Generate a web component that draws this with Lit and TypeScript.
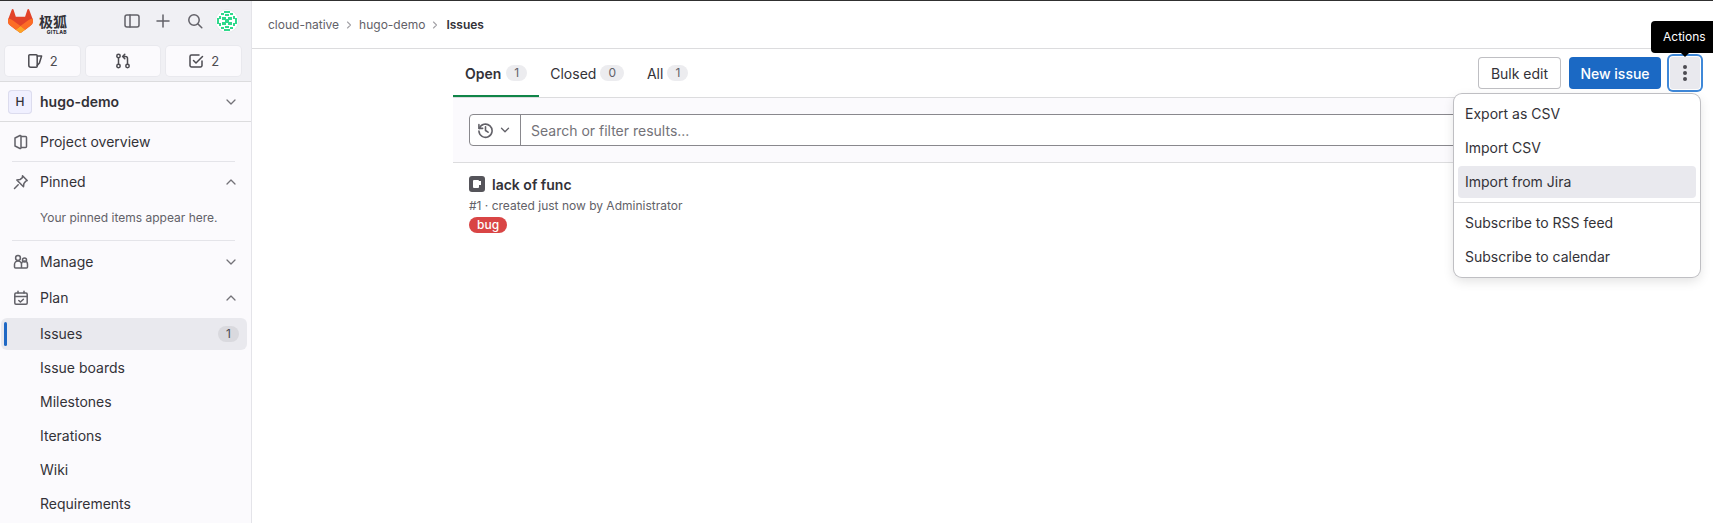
import { LitElement, html, css, svg } from 'lit';
import { customElement } from 'lit/decorators.js';

//
// gitlab issue list, sidebar on the left and the actions menu open
//

const icon = (body: unknown, size = 16) => html`
  <svg class="ico" width="${size}" height="${size}" viewBox="0 0 16 16" fill="none"
    stroke="currentColor" stroke-width="1.5" stroke-linecap="round" stroke-linejoin="round">${body}</svg>`;

const icons = {
  sidebar: svg`<rect x="1" y="2" width="14" height="12" rx="2"/><path d="M6 2v12"/>`,
  plus: svg`<path d="M8 2v12M2 8h12"/>`,
  search: svg`<circle cx="7" cy="7" r="5.2"/><path d="M11 11l3.8 3.8"/>`,
  issues: svg`<path d="M2.8 1.8h6.4a1 1 0 0 1 1 1v10.4a1 1 0 0 1-1 1H3.8a2 2 0 0 1-2-2V2.8a1 1 0 0 1 1-1z"/><path d="M10.2 3h4.4l-2.2 7-2.2 2.5"/>`,
  mr: svg`<circle cx="3.5" cy="3" r="1.7"/><circle cx="3.5" cy="13" r="1.7"/><circle cx="12.5" cy="13" r="1.7"/><path d="M3.5 4.7v6.6M12.5 11.3V5.5a2 2 0 0 0-2-2H8M9.8 1.2L7.6 3.5l2.2 2.3"/>`,
  todo: svg`<path d="M14 8v4.5a1.5 1.5 0 0 1-1.5 1.5h-9A1.5 1.5 0 0 1 2 12.5v-9A1.5 1.5 0 0 1 3.5 2H11"/><path d="M5.5 7.5L8 10l6.5-6.5"/>`,
  project: svg`<path d="M2 4l5-2.5c.5-.2 1 .1 1 .7v11.6c0 .6-.5.9-1 .7l-5-2.5zM8 2.5h4.5a1 1 0 0 1 1 1v9a1 1 0 0 1-1 1H8"/>`,
  pin: svg`<path d="M9.5 1.8l4.7 4.7-1.3.6-2 2.4-.4 3.2-6.7-6.7 3.2-.4 2.4-2zM5.2 10.8L1.5 14.5"/>`,
  users: svg`<circle cx="5" cy="4" r="2.4"/><circle cx="11.5" cy="6" r="2"/><path d="M1.5 13v-2.5a3.5 3.5 0 0 1 7 0V14H2.5a1 1 0 0 1-1-1zM8.5 9.8a3 3 0 0 1 6 .4V13a1 1 0 0 1-1 1h-5"/>`,
  plan: svg`<rect x="1.8" y="3" width="12.4" height="11.2" rx="1.2"/><path d="M1.8 6.5h12.4M5 1.2V3M11 1.2V3M5.8 10.5l1.6 1.5 3-2.8"/>`,
  down: svg`<path d="M4 6l4 4 4-4"/>`,
  up: svg`<path d="M4 10l4-4 4 4"/>`,
  right: svg`<path d="M6 4l4 4-4 4"/>`,
  history: svg`<path d="M1.8 2.5V6h3.5"/><path d="M2.2 6a6.2 6.2 0 1 1-.4 2.5"/><path d="M8 4.5V8l2.4 1.6"/>`,
};

const tanuki = html`
  <svg width="25" height="24" viewBox="0 0 25 24">
    <path fill="#E24329" d="m24.507 9.5-.034-.09L21.082.562a.896.896 0 0 0-1.694.091l-2.29 7.01H7.825L5.535.653a.898.898 0 0 0-1.694-.09L.451 9.411.416 9.5a6.297 6.297 0 0 0 2.09 7.278l.012.01.03.022 5.16 3.867 2.56 1.935 1.554 1.176a1.051 1.051 0 0 0 1.268 0l1.555-1.176 2.56-1.935 5.197-3.89.014-.01A6.297 6.297 0 0 0 24.507 9.5Z"/>
    <path fill="#FC6D26" d="m24.507 9.5-.034-.09a11.44 11.44 0 0 0-4.56 2.051l-7.447 5.632 4.742 3.584 5.197-3.89.014-.01A6.297 6.297 0 0 0 24.507 9.5Z"/>
    <path fill="#FCA326" d="m7.707 20.677 2.56 1.935 1.555 1.176a1.051 1.051 0 0 0 1.268 0l1.555-1.176 2.56-1.935-4.743-3.584-4.755 3.584Z"/>
    <path fill="#FC6D26" d="M5.01 11.461a11.43 11.43 0 0 0-4.56-2.05L.416 9.5a6.297 6.297 0 0 0 2.09 7.278l.012.01.03.022 5.16 3.867 4.745-3.584-7.444-5.632Z"/>
  </svg>`;

// the identicon is a symmetric pattern of green blocks on white
const identicon = html`
  <svg width="24" height="24" viewBox="0 0 24 24">
    <circle cx="12" cy="12" r="11.5" fill="#fff" stroke="#e9e9ee"/>
    <path fill="#2fd98c" d="M9 2h6v2H9zM6 4h3v2H6zM15 4h3v2h-3zM10 5h4v2h-4zM7 8h4v3H7zM13 8h4v3h-4zM7 13h4v3H7zM13 13h4v3h-4zM10 10h4v4h-4zM10 17h4v2h-4zM6 18h3v2H6zM15 18h3v2h-3zM9 20h6v2H9zM2 9h2v6H2zM20 9h2v6h-2zM4 7h2v3H4zM18 7h2v3h-2zM4 14h2v3H4zM18 14h2v3h-2z"/>
  </svg>`;

const subItems = ['Issue boards', 'Milestones', 'Iterations', 'Wiki', 'Requirements'];

@customElement('app-sidebar')
class AppSidebar extends LitElement {
  static styles = css`
    :host {
      display: block;
      width: 252px;
      height: 522px;
      flex: none;
      overflow: hidden;
      box-sizing: border-box;
      background: #fbfafd;
      border-right: 1px solid #e4e4e9;
      color: #333238;
    }
    .ico { display: block; flex: none; }
    .top {
      height: 81px;
      box-sizing: border-box;
      background: #f0f0f4;
      border-bottom: 1px solid #dcdcde;
      padding: 7px 5px 0;
    }
    .brand { display: flex; align-items: center; height: 25px; padding-left: 3px; color: #626168; }
    .logo { display: flex; align-items: center; gap: 6px; width: 116px; }
    .word { display: flex; flex-direction: column; align-items: flex-end; margin-top: 7px; color: #333238; }
    .word b {
      font: 700 14px/15px "Noto Sans CJK SC", sans-serif;
    }
    .word i {
      font: 800 5px/6px Inter, sans-serif;
      font-style: normal;
      letter-spacing: .3px;
    }
    .brand .b2 { margin-left: 15px; }
    .brand .b3 { margin-left: 16px; }
    .brand .avatar { margin-left: 12px; display: flex; }
    .counts { display: flex; gap: 6px; margin-top: 13px; margin-right: 5px; }
    .count {
      display: flex;
      align-items: center;
      justify-content: center;
      gap: 7px;
      width: 75px;
      height: 30px;
      border-radius: 4px;
      background: #fbfafd;
      box-shadow: 0 0 0 1px #e9e9ee;
      font-size: 13px;
      color: #4c4b51;
    }
    .project {
      display: flex;
      align-items: center;
      height: 39px;
      padding: 0 12px 0 8px;
      border-bottom: 1px solid #dcdcde;
      font-weight: 600;
    }
    .tile {
      width: 24px;
      height: 24px;
      box-sizing: border-box;
      display: flex;
      align-items: center;
      justify-content: center;
      margin-right: 8px;
      border-radius: 4px;
      background: #f0f0ff;
      box-shadow: inset 0 0 0 1px #dcdcee;
      font-size: 12px;
      font-weight: 500;
    }
    .grow { flex: 1; }
    .row {
      display: flex;
      align-items: center;
      height: 32px;
      margin: 0 4px 0 1px;
      padding: 0 8px 0 12px;
      font-size: 14px;
      line-height: 20px;
    }
    .row > .ico { color: #626168; margin-right: 11px; }
    .chev { color: #737278; }
    .chev .ico { stroke-width: 1.3; }
    .sep { height: 1px; background: #e4e4e9; margin: 0 16px 0 12px; }
    .sub { padding-left: 39px; margin-top: 2px; }
    .overview { margin-top: 4px; }
    .hint {
      font-size: 12px;
      color: #626168;
      padding-left: 40px;
      line-height: 20px;
      margin: 10px 0 12px;
    }
    .pinned { margin-top: 4px; }
    .manage { margin-top: 5px; }
    .plan { margin-top: 4px; }
    .active {
      position: relative;
      background: #e9e9ee;
      border-radius: 6px;
      margin-top: 4px;
    }
    .active::before {
      content: '';
      position: absolute;
      left: 3px;
      top: 4px;
      bottom: 4px;
      width: 3px;
      border-radius: 2px;
      background: #1f68c4;
    }
    .pill {
      min-width: 21px;
      box-sizing: border-box;
      height: 16px;
      border-radius: 8px;
      background: #d9d9de;
      font-size: 12px;
      line-height: 16px;
      text-align: center;
      color: #4c4b51;
    }
  `;

  render() {
    return html`
      <div class="top">
        <div class="brand">
          <div class="logo">
            ${tanuki}
            <div class="word"><b>极狐</b><i>GITLAB</i></div>
          </div>
          <span class="b1">${icon(icons.sidebar)}</span>
          <span class="b2">${icon(icons.plus)}</span>
          <span class="b3">${icon(icons.search)}</span>
          <span class="avatar">${identicon}</span>
        </div>
        <div class="counts">
          <div class="count">${icon(icons.issues)}<span>2</span></div>
          <div class="count">${icon(icons.mr)}</div>
          <div class="count">${icon(icons.todo)}<span>2</span></div>
        </div>
      </div>
      <div class="project">
        <div class="tile">H</div>
        <span class="grow">hugo-demo</span>
        <span class="chev">${icon(icons.down)}</span>
      </div>
      <div class="row overview">${icon(icons.project)}<span class="grow">Project overview</span></div>
      <div class="sep" style="margin-top:3px"></div>
      <div class="row pinned">${icon(icons.pin)}<span class="grow">Pinned</span><span class="chev">${icon(icons.up)}</span></div>
      <div class="hint">Your pinned items appear here.</div>
      <div class="sep"></div>
      <div class="row manage">${icon(icons.users)}<span class="grow">Manage</span><span class="chev">${icon(icons.down)}</span></div>
      <div class="row plan">${icon(icons.plan)}<span class="grow">Plan</span><span class="chev">${icon(icons.up)}</span></div>
      <div class="row active sub"><span class="grow">Issues</span><span class="pill">1</span></div>
      ${subItems.map(x => html`<div class="row sub"><span class="grow">${x}</span></div>`)}
    `;
  }
}

@customElement('app-root')
export class AppRoot extends LitElement {
  static styles = css`
    :host {
      display: block;
      position: relative;
      height: 523px;
      overflow: hidden;
      box-sizing: border-box;
      border-top: 1px solid #303030;
      background: #fff;
      font-family: Inter, sans-serif;
      font-size: 14px;
      color: #333238;
    }
    .ico { display: block; flex: none; }
    .shell { display: flex; }
    .main { flex: 1; min-width: 0; }
    .crumbs {
      display: flex;
      align-items: center;
      gap: 4px;
      height: 48px;
      box-sizing: border-box;
      padding-left: 16px;
      border-bottom: 1px solid #dcdcde;
      font-size: 12px;
      color: #626168;
    }
    .crumbs .ico { color: #a4a3a8; }
    .crumbs b { color: #333238; font-weight: 600; margin-left: 1px; }
    .content { width: 1247px; margin-left: 201px; }
    .tabs {
      display: flex;
      align-items: flex-start;
      height: 49px;
      box-sizing: border-box;
      border-bottom: 1px solid #dcdcde;
    }
    .tab {
      display: flex;
      align-items: center;
      gap: 4px;
      height: 48px;
      padding: 0 12px;
      box-sizing: border-box;
      font-size: 14px;
    }
    .tab + .tab { padding-left: 11px; }
    .tab.on {
      gap: 5px;
      font-weight: 600;
      box-shadow: inset 0 -2px 0 #108548;
    }
    .tab span {
      font-size: 12px;
      font-weight: 400;
      line-height: 16px;
      padding: 0 8px;
      text-align: center;
      border-radius: 8px;
      background: #ececef;
      color: #626168;
    }
    .actions { display: flex; align-items: center; gap: 8px; margin-left: auto; height: 32px; margin-top: 8px; }
    .btn {
      display: flex;
      align-items: center;
      justify-content: center;
      height: 32px;
      box-sizing: border-box;
      border-radius: 4px;
      font-size: 14px;
    }
    .bulk { width: 83px; box-shadow: inset 0 0 0 1px #bfbfc3; }
    .new { width: 92px; background: #1b69c4; color: #fff; font-weight: 500; }
    .kebab {
      width: 30px;
      margin-left: 1px;
      background: #e9e9ee;
      box-shadow: 0 0 0 1px #fff, 0 0 0 3px #3f88d8;
      border-radius: 3px;
    }
    .kebab i { display: block; width: 4px; height: 4px; margin: 2px 0; border-radius: 50%; background: #4c4b51; }
    .filter {
      height: 65px;
      box-sizing: border-box;
      padding: 16px;
      background: #fbfafd;
      border-bottom: 1px solid #dcdcde;
    }
    .search {
      display: flex;
      height: 32px;
      box-sizing: border-box;
      border: 1px solid #89888d;
      border-radius: 4px;
      background: #fff;
    }
    .hist {
      display: flex;
      align-items: center;
      gap: 4px;
      width: 51px;
      box-sizing: border-box;
      padding-left: 7px;
      border-right: 1px solid #89888d;
      color: #626168;
    }
    .query { padding-left: 10px; line-height: 31px; color: #737278; }
    .issue { padding: 11px 16px 0; }
    .title { display: flex; align-items: center; gap: 7px; font-weight: 600; height: 20px; }
    .state {
      display: flex;
      align-items: center;
      justify-content: center;
      width: 16px;
      height: 16px;
      border-radius: 3px;
      background: #55545a;
    }
    .state i { position: relative; display: block; width: 6px; height: 8px; background: #fff; border-radius: 1px; margin-right: 3px; }
    .state i::after { content: ''; position: absolute; left: 6.500px; top: 1px; width: 2px; height: 4px; background: #fff; }
    .meta { font-size: 12px; line-height: 16px; color: #626168; margin-top: 4px; }
    .label {
      display: inline-block;
      margin-top: 3px;
      height: 16px;
      padding: 0 8px;
      border-radius: 8px;
      background: #d94545;
      color: #fff;
      font-size: 12px;
      font-weight: 500;
      line-height: 16px;
    }
    .tooltip {
      position: absolute;
      left: 1651px;
      top: 20px;
      width: 80px;
      height: 32px;
      box-sizing: border-box;
      padding-left: 12px;
      background: #000;
      color: #fff;
      border-radius: 4px;
      font-size: 12px;
      line-height: 31px;
    }
    .tooltip::after {
      content: '';
      position: absolute;
      left: 30px;
      top: 32px;
      border: 4px solid transparent;
      border-top-color: #000;
      border-bottom: 0;
    }
    .menu {
      position: absolute;
      left: 1454px;
      top: 93px;
      width: 246px;
      box-sizing: border-box;
      padding: 4px;
      display: flex;
      flex-direction: column;
      gap: 2px;
      background: #fff;
      border-radius: 8px;
      box-shadow: 0 0 0 1px #bfbfc3, 0 4px 12px rgba(0, 0, 0, .12);
    }
    .menu div {
      height: 32px;
      line-height: 32px;
      padding: 0 7px;
      border-radius: 4px;
    }
    .menu .hover { background: #e9e9ee; }
    .menu hr { border: 0; height: 1px; margin: 2px -4px; background: #dcdcde; }
  `;

  render() {
    return html`
      <div class="shell">
        <app-sidebar></app-sidebar>
        <div class="main">
          <div class="crumbs">
            <span>cloud-native</span>${icon(icons.right, 12)}
            <span>hugo-demo</span>${icon(icons.right, 12)}
            <b>Issues</b>
          </div>
          <div class="content">
            <div class="tabs">
              <div class="tab on">Open <span>1</span></div>
              <div class="tab">Closed <span>0</span></div>
              <div class="tab">All <span>1</span></div>
              <div class="actions">
                <div class="btn bulk">Bulk edit</div>
                <div class="btn new">New issue</div>
                <div class="btn kebab"><div><i></i><i></i><i></i></div></div>
              </div>
            </div>
            <div class="filter">
              <div class="search">
                <div class="hist">${icon(icons.history, 17)}${icon(icons.down, 14)}</div>
                <div class="query">Search or filter results...</div>
              </div>
            </div>
            <div class="issue">
              <div class="title"><div class="state"><i></i></div>lack of func</div>
              <div class="meta">#1 · created just now by Administrator</div>
              <div class="label">bug</div>
            </div>
          </div>
        </div>
      </div>
      <div class="tooltip">Actions</div>
      <div class="menu">
        <div>Export as CSV</div>
        <div>Import CSV</div>
        <div class="hover">Import from Jira</div>
        <hr />
        <div>Subscribe to RSS feed</div>
        <div>Subscribe to calendar</div>
      </div>
    `;
  }
}
